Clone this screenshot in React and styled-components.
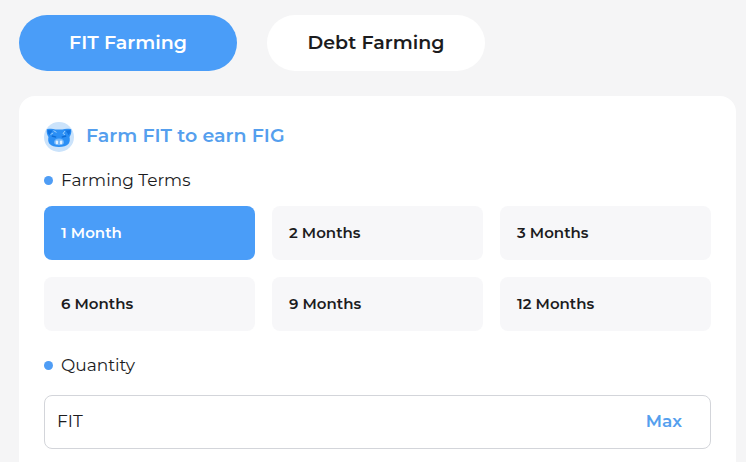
import { useState } from 'react';
import styled, { createGlobalStyle } from 'styled-components';

const tabs = ['FIT Farming', 'Debt Farming'];
const terms = ['1 Month', '2 Months', '3 Months', '6 Months', '9 Months', '12 Months'];

function PigLogo() {
  return (
    <svg width="30" height="30" viewBox="0 0 30 30" aria-hidden="true">
      <circle cx="15" cy="15" r="15" fill="#cbe3fb" />
      <path
        d="M2.800 7.300C6 6.600 9 6.800 11.500 7.400h7C21 6.800 24 6.600 27.200 7.300c.5 3.200-.3 5.700-1.700 7.700.6 2.500.4 5-.9 6.800C22.500 24.300 19 25 15 25s-7.500-.7-9.600-3.200C4.100 20 3.900 17.500 4.500 15 3.100 13 2.300 10.500 2.800 7.300z"
        fill="#2b8ff5"
      />
      <path d="M3.600 8l4.900.5-3.200 4.800C4 11.800 3.500 10 3.600 8zM26.400 8l-4.900.5 3.200 4.800c1.300-1.500 1.800-3.300 1.700-5.300z" fill="#1173e0" />
      <path d="M9.500 8.600l3 1.800M21 9l-2 2.600 2 1M6.600 12.500l2.600-1.600" stroke="#9dcffc" strokeWidth="1" fill="none" />
      <path d="M7.800 14l4.400 1.200M22.200 14l-4.400 1.200" stroke="#0f6bd3" strokeWidth="1.300" />
      <path d="M10 20.500c0-2.600 2-4 5-4s5 1.400 5 4c0 1.700-2 2.800-5 2.800s-5-1.100-5-2.800z" fill="#74b7fa" />
      <rect x="11.700" y="18.400" width="2.400" height="3.800" rx="1.200" fill="#e1f0ff" />
      <rect x="15.900" y="18.400" width="2.400" height="3.800" rx="1.200" fill="#e1f0ff" />
    </svg>
  );
}

export default function App() {
  const [tab, setTab] = useState(tabs[0]);
  const [term, setTerm] = useState(terms[0]);
  const [quantity, setQuantity] = useState('');

  return (
    <>
      <GlobalStyle />
      <Page>
        <Tabs>
          {tabs.map((name) => (
            <TabButton key={name} type="button" $active={tab === name} aria-pressed={tab === name} onClick={() => setTab(name)}>
              {name}
            </TabButton>
          ))}
        </Tabs>
        <Card>
          <Title>
            <PigLogo />
            Farm FIT to earn FIG
          </Title>
          <SectionLabel as="h2" id="terms">Farming Terms</SectionLabel>
          <TermGrid role="group" aria-labelledby="terms">
            {terms.map((name) => (
              <TermButton key={name} type="button" $active={term === name} aria-pressed={term === name} onClick={() => setTerm(name)}>
                {name}
              </TermButton>
            ))}
          </TermGrid>
          <SectionLabel htmlFor="quantity">Quantity</SectionLabel>
          <Field>
            <QuantityInput
              id="quantity"
              placeholder="FIT"
              value={quantity}
              onChange={(e) => setQuantity(e.target.value)}
            />
            <MaxButton type="button">Max</MaxButton>
          </Field>
        </Card>
      </Page>
    </>
  );
}

const GlobalStyle = createGlobalStyle`
  * {
    box-sizing: border-box;
  }
  body {
    margin: 0;
    background-color: #f5f5f6;
    color: #1c1c1e;
  }
  body, button, input {
    font-family: Montserrat, Inter, sans-serif;
  }
`;

const Page = styled.main`
  min-height: 100vh;
  display: flex;
  flex-direction: column;
  gap: 25px;
  padding: 15px 10px 0 19px;
`;

const Tabs = styled.div`
  display: flex;
  gap: 30px;
`;

const TabButton = styled.button`
  width: 218px;
  height: 56px;
  padding: 0 0 1px;
  border: none;
  border-radius: 28px;
  background-color: ${(props) => (props.$active ? '#4a9df8' : '#ffffff')};
  color: ${(props) => (props.$active ? '#ffffff' : '#1c1c1e')};
  font-size: 19px;
  font-weight: 600;
  cursor: pointer;
`;

const Card = styled.section`
  flex: 1;
  display: flex;
  flex-direction: column;
  padding: 26px 25px 13px;
  border-radius: 16px 16px 0 0;
  background-color: #ffffff;
`;

const Title = styled.h1`
  display: flex;
  align-items: flex-start;
  gap: 12px;
  margin: 0;
  color: #559fee;
  font-size: 19px;
  font-weight: 600;
  line-height: 28px;
`;

const SectionLabel = styled.label`
  display: flex;
  align-items: center;
  gap: 8px;
  margin: 16px 0 14px;
  font-size: 17px;
  font-weight: 400;
  line-height: 24px;

  &::before {
    content: '';
    width: 9px;
    height: 9px;
    border-radius: 50%;
    background-color: #4f9df5;
  }
`;

const TermGrid = styled.div`
  display: grid;
  grid-template-columns: repeat(3, 1fr);
  gap: 17px;
  margin-bottom: 6px;
`;

const TermButton = styled.button`
  height: 54px;
  padding: 0 17px 2px;
  border: none;
  border-radius: 8px;
  background-color: ${(props) => (props.$active ? '#4a9df8' : '#f7f7f9')};
  color: ${(props) => (props.$active ? '#ffffff' : '#1c1c1e')};
  font-size: 15px;
  font-weight: 600;
  text-align: left;
  cursor: pointer;
`;

const Field = styled.div`
  display: flex;
  align-items: center;
  height: 54px;
  margin-top: 4px;
  padding: 0 28px 2px 12px;
  border: 1px solid #d3d5da;
  border-radius: 8px;
`;

const QuantityInput = styled.input`
  flex: 1;
  min-width: 0;
  padding: 0;
  border: none;
  outline: none;
  background: transparent;
  color: #1c1c1e;
  font-size: 17px;

  &::placeholder {
    color: #1c1c1e;
    opacity: 1;
  }
`;

const MaxButton = styled.button`
  padding: 0;
  border: none;
  background: none;
  color: #559fee;
  font-size: 17px;
  font-weight: 600;
  cursor: pointer;
`;
